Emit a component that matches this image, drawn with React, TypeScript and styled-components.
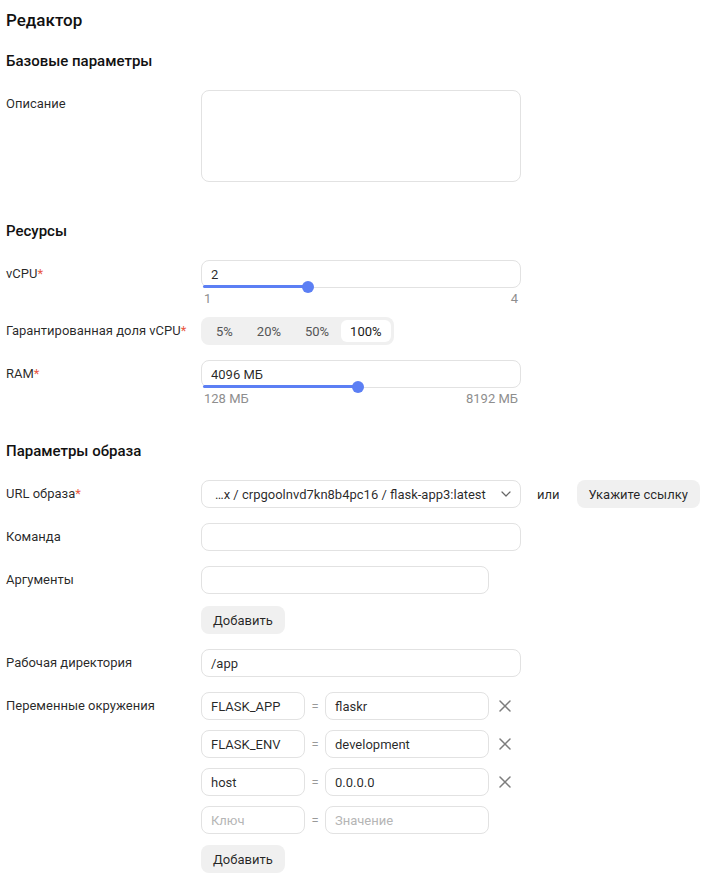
import React from "react";
import styled, { createGlobalStyle } from "styled-components";

const Global = createGlobalStyle`
  html, body { margin: 0; padding: 0; background: #fff; }
  body {
    font-family: Roboto, "Noto Sans", sans-serif;
    color: rgba(0, 0, 0, 0.85);
    font-size: 13px;
  }
  * { box-sizing: border-box; }
`;

const BLUE = "#5c7ff4";
const BORDER = "#e2e2e2";

const Page = styled.div`
  width: 725px;
  padding: 8px 6px 0 6px;
  display: flex;
  flex-direction: column;
`;

const Title = styled.h1`
  margin: 0;
  font-size: 17px;
  line-height: 24px;
  font-weight: 500;
  color: #111;
`;

const Section = styled.section<{ $top: number }>`
  margin-top: ${(p) => p.$top}px;
  display: flex;
  flex-direction: column;
`;

const Heading = styled.h2`
  margin: 0 0 19px 0;
  font-size: 15px;
  line-height: 20px;
  font-weight: 500;
  color: #111;
`;

const Row = styled.div<{ $top?: number }>`
  display: grid;
  grid-template-columns: 195px auto;
  margin-top: ${(p) => p.$top ?? 0}px;
  align-items: start;
`;

const Label = styled.div`
  font-size: 13px;
  line-height: 28px;
  white-space: nowrap;
  color: rgba(0, 0, 0, 0.85);
`;

const Req = styled.span`
  color: #e9573f;
`;

const Control = styled.div`
  display: flex;
  flex-direction: column;
  align-items: flex-start;
`;

const Input = styled.div<{ $w: number; $muted?: boolean }>`
  width: ${(p) => p.$w}px;
  height: 28px;
  border: 1px solid ${BORDER};
  border-radius: 8px;
  padding: 0 9px;
  display: flex;
  align-items: center;
  font-size: 13px;
  color: ${(p) => (p.$muted ? "#b5b5b5" : "rgba(0,0,0,0.85)")};
  white-space: nowrap;
  overflow: hidden;
`;

const TextArea = styled.div`
  width: 320px;
  height: 92px;
  border: 1px solid ${BORDER};
  border-radius: 8px;
`;

const SliderBox = styled.div`
  position: relative;
  width: 320px;
`;

const Track = styled.div`
  position: absolute;
  left: 2px;
  bottom: 0;
  height: 3px;
  border-radius: 2px;
  background: ${BLUE};
`;

const Thumb = styled.div`
  position: absolute;
  bottom: -5px;
  width: 12px;
  height: 12px;
  margin-left: -6px;
  border-radius: 50%;
  background: ${BLUE};
`;

const RangeLabels = styled.div`
  width: 320px;
  display: flex;
  justify-content: space-between;
  padding: 0 3px;
  margin-top: 3px;
  font-size: 13px;
  line-height: 16px;
  color: #8e8e8e;
`;

const Segmented = styled.div`
  display: flex;
  height: 28px;
  padding: 3px;
  background: #f0f0f0;
  border-radius: 8px;
`;

const Segment = styled.div<{ $active?: boolean }>`
  height: 22px;
  padding: 0 ${(p) => (p.$active ? 9 : 12)}px;
  display: flex;
  align-items: center;
  justify-content: center;
  border-radius: 6px;
  font-size: 13px;
  background: ${(p) => (p.$active ? "#fff" : "transparent")};
  color: ${(p) => (p.$active ? "#1a1a1a" : "#555")};
`;

const Inline = styled.div<{ $gap: number }>`
  display: flex;
  align-items: center;
  gap: ${(p) => p.$gap}px;
`;

const Select = styled.div`
  width: 320px;
  height: 28px;
  border: 1px solid ${BORDER};
  border-radius: 8px;
  padding: 0 9px 0 13px;
  display: flex;
  align-items: center;
  justify-content: space-between;
  font-size: 13px;
  white-space: nowrap;
`;

const Or = styled.span`
  font-size: 13px;
  color: rgba(0, 0, 0, 0.85);
  margin-right: 1px;
`;

const Button = styled.div<{ $top?: number }>`
  height: 28px;
  padding: 0 12px;
  margin-top: ${(p) => p.$top ?? 0}px;
  display: inline-flex;
  align-items: center;
  border-radius: 8px;
  background: #f0f0f0;
  font-size: 13px;
  color: rgba(0, 0, 0, 0.85);
  white-space: nowrap;
`;

const EnvList = styled.div`
  display: flex;
  flex-direction: column;
  gap: 10px;
`;

const EnvRow = styled.div`
  display: flex;
  align-items: center;
`;

const Eq = styled.span`
  width: 20px;
  text-align: center;
  color: #999;
  font-size: 13px;
`;

const Remove = styled.div`
  width: 32px;
  height: 28px;
  display: flex;
  align-items: center;
  justify-content: center;
`;

const Cross = () => (
  <svg width="12" height="12" viewBox="0 0 12 12">
    <path d="M1 1L11 11M11 1L1 11" stroke="#7d7d7d" strokeWidth="1.5" strokeLinecap="round" />
  </svg>
);

const Chevron = () => (
  <svg width="10" height="6" viewBox="0 0 10 6">
    <path d="M1 1L5 5L9 1" stroke="#666" strokeWidth="1.2" fill="none" strokeLinecap="round" strokeLinejoin="round" />
  </svg>
);

function SliderField({
  value,
  cur,
  min,
  max,
  minLabel,
  maxLabel,
}: {
  value: string;
  cur: number;
  min: number;
  max: number;
  minLabel: string;
  maxLabel: string;
}) {
  const trackW = 313;
  const pos = ((cur - min) / (max - min)) * trackW;
  return (
    <Control>
      <SliderBox>
        <Input $w={320}>{value}</Input>
        <Track style={{ width: pos }} />
        <Thumb style={{ left: pos + 3 }} />
      </SliderBox>
      <RangeLabels>
        <span>{minLabel}</span>
        <span>{maxLabel}</span>
      </RangeLabels>
    </Control>
  );
}

const envs = [
  { k: "FLASK_APP", v: "flaskr" },
  { k: "FLASK_ENV", v: "development" },
  { k: "host", v: "0.0.0.0" },
];

export default function App() {
  return (
    <>
      <Global />
      <Page>
        <Title>Редактор</Title>

        <Section $top={19}>
          <Heading>Базовые параметры</Heading>
          <Row>
            <Label>Описание</Label>
            <TextArea />
          </Row>
        </Section>

        <Section $top={39}>
          <Heading>Ресурсы</Heading>
          <Row>
            <Label>
              vCPU<Req>*</Req>
            </Label>
            <SliderField value="2" cur={2} min={1} max={4} minLabel="1" maxLabel="4" />
          </Row>
          <Row $top={10}>
            <Label>
              Гарантированная доля vCPU<Req>*</Req>
            </Label>
            <Control>
              <Segmented>
                <Segment>5%</Segment>
                <Segment>20%</Segment>
                <Segment>50%</Segment>
                <Segment $active>100%</Segment>
              </Segmented>
            </Control>
          </Row>
          <Row $top={15}>
            <Label>
              RAM<Req>*</Req>
            </Label>
            <SliderField value="4096 МБ" cur={4096} min={128} max={8192} minLabel="128 МБ" maxLabel="8192 МБ" />
          </Row>
        </Section>

        <Section $top={34}>
          <Heading>Параметры образа</Heading>
          <Row>
            <Label>
              URL образа<Req>*</Req>
            </Label>
            <Inline $gap={16}>
              <Select>
                <span>…x / crpgoolnvd7kn8b4pc16 / flask-app3:latest</span>
                <Chevron />
              </Select>
              <Or>или</Or>
              <Button>Укажите ссылку</Button>
            </Inline>
          </Row>
          <Row $top={15}>
            <Label>Команда</Label>
            <Input $w={320} />
          </Row>
          <Row $top={15}>
            <Label>Аргументы</Label>
            <Control>
              <Input $w={288} />
              <Button $top={12}>Добавить</Button>
            </Control>
          </Row>
          <Row $top={15}>
            <Label>Рабочая директория</Label>
            <Input $w={320}>/app</Input>
          </Row>
          <Row $top={15}>
            <Label>Переменные окружения</Label>
            <Control>
              <EnvList>
                {envs.map((e) => (
                  <EnvRow key={e.k}>
                    <Input $w={104}>{e.k}</Input>
                    <Eq>=</Eq>
                    <Input $w={164}>{e.v}</Input>
                    <Remove>
                      <Cross />
                    </Remove>
                  </EnvRow>
                ))}
                <EnvRow>
                  <Input $w={104} $muted>
                    Ключ
                  </Input>
                  <Eq>=</Eq>
                  <Input $w={164} $muted>
                    Значение
                  </Input>
                </EnvRow>
              </EnvList>
              <Button $top={11}>Добавить</Button>
            </Control>
          </Row>
        </Section>
      </Page>
    </>
  );
}
